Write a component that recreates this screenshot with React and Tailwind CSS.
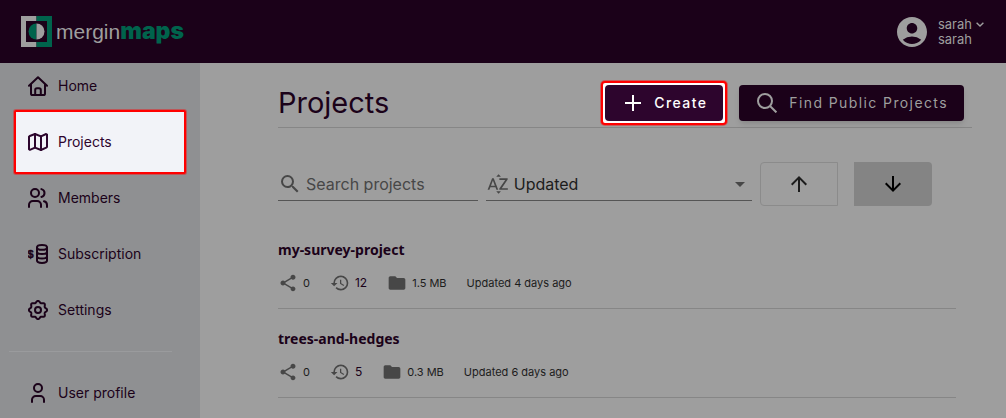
import React from "react";
import {
  MdAccountCircle,
  MdArrowDownward,
  MdArrowDropDown,
  MdArrowUpward,
  MdFolder,
  MdHistory,
  MdSearch,
  MdShare,
  MdSortByAlpha,
} from "react-icons/md";

const gearPath =
  Array.from({ length: 97 }, (_, i) => {
    const angle = (i / 96) * Math.PI * 2;
    const radius = 8.2 + 0.9 * Math.cos(8 * angle);
    const x = (10 + radius * Math.cos(angle)).toFixed(2);
    const y = (10 + radius * Math.sin(angle)).toFixed(2);
    return `${i ? "L" : "M"}${x} ${y}`;
  }).join("") + "Z";

function Icon({ children }) {
  return (
    <svg
      viewBox="0 0 20 20"
      className="size-5 shrink-0"
      fill="none"
      stroke="currentColor"
      strokeWidth="2"
      strokeLinecap="round"
      strokeLinejoin="round"
      aria-hidden="true"
    >
      {children}
    </svg>
  );
}

const icons = {
  home: (
    <Icon>
      <path d="M1 9.8 10 1.2l9 8.6M3 8.5v8.9A1.600 1.600 0 0 0 4.600 19h10.800a1.600 1.600 0 0 0 1.600-1.600V8.500" />
      <path d="M7.200 19v-5A1.800 1.800 0 0 1 9 12.200h2a1.800 1.800 0 0 1 1.800 1.800v5" />
    </Icon>
  ),
  map: (
    <Icon>
      <path d="M1 4.800v12.400l.9.6L7 15.600l6 2.400 5.200-2.300.8-.8V2.500l-.9-.5L13 4.400 7 2 1.800 4Z" />
      <path d="M7 2v13.600M13 4.400V18" />
    </Icon>
  ),
  members: (
    <Icon>
      <circle cx="7" cy="5" r="4" />
      <path d="M1 19v-2.200A3.800 3.800 0 0 1 4.800 13h4.400a3.800 3.800 0 0 1 3.800 3.800V19" />
      <path d="M13.400 1.100a4 4 0 0 1 0 7.800M16 13.300a3.800 3.800 0 0 1 3 3.700v2" />
    </Icon>
  ),
  subscription: (
    <Icon>
      <text
        x="-0.5"
        y="14"
        fontFamily="Liberation Sans, sans-serif"
        fontSize="11"
        fontWeight="700"
        fill="currentColor"
        stroke="currentColor"
        strokeWidth="0.4"
      >
        $
      </text>
      <ellipse cx="14" cy="3.400" rx="5" ry="2.400" />
      <path d="M9 3.400v13.200c0 1.300 2.200 2.400 5 2.400s5-1.100 5-2.400V3.400M9 7.800c0 1.300 2.200 2.300 5 2.300s5-1 5-2.300M9 12.200c0 1.300 2.200 2.300 5 2.300s5-1 5-2.300" />
    </Icon>
  ),
  settings: (
    <Icon>
      <path d={gearPath} />
      <circle cx="10" cy="10" r="3" />
    </Icon>
  ),
  user: (
    <Icon>
      <circle cx="10" cy="5" r="4" />
      <path d="M4 19v-2.200A3.800 3.800 0 0 1 7.800 13h4.400a3.800 3.800 0 0 1 3.800 3.800V19" />
    </Icon>
  ),
};

function NavLink({ icon, label, active = false }) {
  return (
    <li>
      <a
        href="#"
        aria-current={active ? "page" : undefined}
        className={
          active
            ? "-my-5 mr-3.5 ml-3.5 flex h-16 items-center gap-2.5 rounded-xs border-2 border-[#ff0000] bg-[#f2f3f8] pl-3 text-[#2d052d] ring-1 ring-[#ff0000]/40"
            : "flex h-6 items-center gap-2.5 pl-7 text-[#1b0219]"
        }
      >
        {icons[icon]}
        {label}
      </a>
    </li>
  );
}

function Logo() {
  return (
    <a href="#" className="flex items-center gap-1" aria-label="merginmaps">
      <svg viewBox="0 0 31 31" className="size-[31px]" aria-hidden="true">
        <path fill="#9e9e9e" d="M0 0h15.500v5H5v21h10.500v5H0Z" />
        <path fill="#00634c" d="M31 0H15.500v5H26v21H15.500v5H31Z" />
        <path fill="#00634c" d="M15.500 7.500a8 8 0 0 0 0 16Z" />
        <path fill="#9e9e9e" d="M15.500 7.500a8 8 0 0 1 0 16Z" />
      </svg>
      <span className="flex items-baseline leading-8">
        <span className="font-['Liberation_Sans',sans-serif] text-[21px] text-[#9e9e9e]">mergin</span>
        <span className="text-[23px] font-black text-[#00634c]">maps</span>
      </span>
    </a>
  );
}

function Project({ name, shares, versions, size, updated }) {
  return (
    <li className="border-b border-[#868686] pt-5 pb-[15px]">
      <h2 className="font-['Noto_Sans',sans-serif] text-sm leading-5 font-bold text-[#1b0219]">
        <a href="#">{name}</a>
      </h2>
      <div className="mt-[13px] flex h-5 items-center gap-5 text-[11px] text-[#1c1c1c]">
        <span className="flex items-center gap-[5px]">
          <MdShare className="size-5 text-[#474747]" />
          {shares}
        </span>
        <a href="#" className="flex items-center gap-[5px] text-xs text-[#1b0219]">
          <MdHistory className="size-5 text-[#474747]" />
          {versions}
        </a>
        <span className="flex items-center gap-[5px]">
          <MdFolder className="size-5 text-[#474747]" />
          {size}
        </span>
        <span>Updated {updated}</span>
      </div>
    </li>
  );
}

export default function App() {
  return (
    <div className="flex min-h-screen flex-col bg-[#9e9e9e] font-['Inter',sans-serif]">
      <header className="flex h-[63px] items-center justify-between bg-[#1b0119] pr-[22px] pl-[21px]">
        <Logo />
        <button type="button" className="flex items-center gap-2 text-left text-[#9e9e9e]">
          <MdAccountCircle className="size-9" />
          <span className="text-[13px] leading-[15px]">
            <span className="flex items-center gap-1">
              sarah
              <svg viewBox="0 0 8 5" className="w-2" fill="none" stroke="currentColor" strokeWidth="1.4" aria-hidden="true">
                <path d="M.6.7 4 4 7.400.7" />
              </svg>
            </span>
            <span className="block">sarah</span>
          </span>
        </button>
      </header>

      <div className="flex flex-1">
        <nav className="w-[200px] shrink-0 bg-[#8f9092] pt-[11px] text-sm" aria-label="Main">
          <ul className="flex flex-col gap-8">
            <NavLink icon="home" label="Home" />
            <NavLink icon="map" label="Projects" active />
            <NavLink icon="members" label="Members" />
            <NavLink icon="subscription" label="Subscription" />
            <NavLink icon="settings" label="Settings" />
          </ul>
          <hr className="my-[29px] mr-7 ml-[9px] border-[#9a9b9d]" />
          <ul>
            <NavLink icon="user" label="User profile" />
          </ul>
        </nav>

        <main className="min-w-0 flex-1 pl-[78px]">
          <div className="mr-[34px] flex items-center justify-between border-b border-[#868686] pt-[18px] pr-2 pb-0.5">
            <h1 className="text-[29px] leading-10 text-[#1b0219]">Projects</h1>
            <div className="flex items-center gap-3">
              <div className="rounded-sm border-2 border-[#ff0000] bg-white p-0.5 ring-1 ring-[#ff0000]/40">
                <button
                  type="button"
                  className="flex h-9 items-center gap-[13px] rounded-sm bg-[#2d052d] pr-4 pl-5 text-sm font-medium tracking-widest text-white"
                >
                  <svg viewBox="0 0 16 16" className="size-4" stroke="currentColor" strokeWidth="2" aria-hidden="true">
                    <path d="M8 0v16M0 8h16" />
                  </svg>
                  Create
                </button>
              </div>
              <button
                type="button"
                className="flex h-9 items-center gap-3 rounded-sm bg-[#1b0119] pr-4 pl-[18px] text-sm tracking-widest text-[#9e9e9e] shadow-md"
              >
                <svg viewBox="0 0 20 20" className="size-5" fill="none" stroke="currentColor" strokeWidth="2" aria-hidden="true">
                  <circle cx="8" cy="8" r="7" />
                  <path d="m13 13 6.400 6.400" />
                </svg>
                Find Public Projects
              </button>
            </div>
          </div>

          <div className="mt-[34px] mr-[74px] flex items-center gap-2">
            <label className="mb-[5px] flex h-[33px] min-w-0 flex-[3] items-center gap-1 self-end border-b border-[#555]">
              <MdSearch className="size-6 shrink-0 text-[#474747]" />
              <input
                type="search"
                aria-label="Search projects"
                placeholder="Search projects"
                className="w-full min-w-0 bg-transparent text-base text-[#1c1c1c] outline-none placeholder:text-[#474747]"
              />
            </label>
            <label className="mb-[5px] flex h-[33px] min-w-0 flex-[4] items-center gap-1 self-end border-b border-[#555]">
              <MdSortByAlpha className="size-6 shrink-0 text-[#474747]" />
              <select aria-label="Sort by" className="w-full min-w-0 appearance-none bg-transparent text-base text-[#1c1c1c] outline-none">
                <option>Updated</option>
              </select>
              <MdArrowDropDown className="pointer-events-none size-6 shrink-0 text-[#474747]" />
            </label>
            <div className="flex gap-4">
              <button
                type="button"
                aria-label="Sort ascending"
                className="flex h-11 w-[78px] items-center justify-center rounded-l-sm border border-[#8b8b8b] text-[#1c1c1c]"
              >
                <MdArrowUpward className="size-6" />
              </button>
              <button
                type="button"
                aria-label="Sort descending"
                className="flex h-11 w-[78px] items-center justify-center rounded-r-sm bg-[#848484] text-black"
              >
                <MdArrowDownward className="size-6" />
              </button>
            </div>
          </div>

          <ul className="mt-3.5 mr-[50px]">
            <Project name="my-survey-project" shares="0" versions="12" size="1.5 MB" updated="4 days ago" />
            <Project name="trees-and-hedges" shares="0" versions="5" size="0.3 MB" updated="6 days ago" />
          </ul>
        </main>
      </div>
    </div>
  );
}
